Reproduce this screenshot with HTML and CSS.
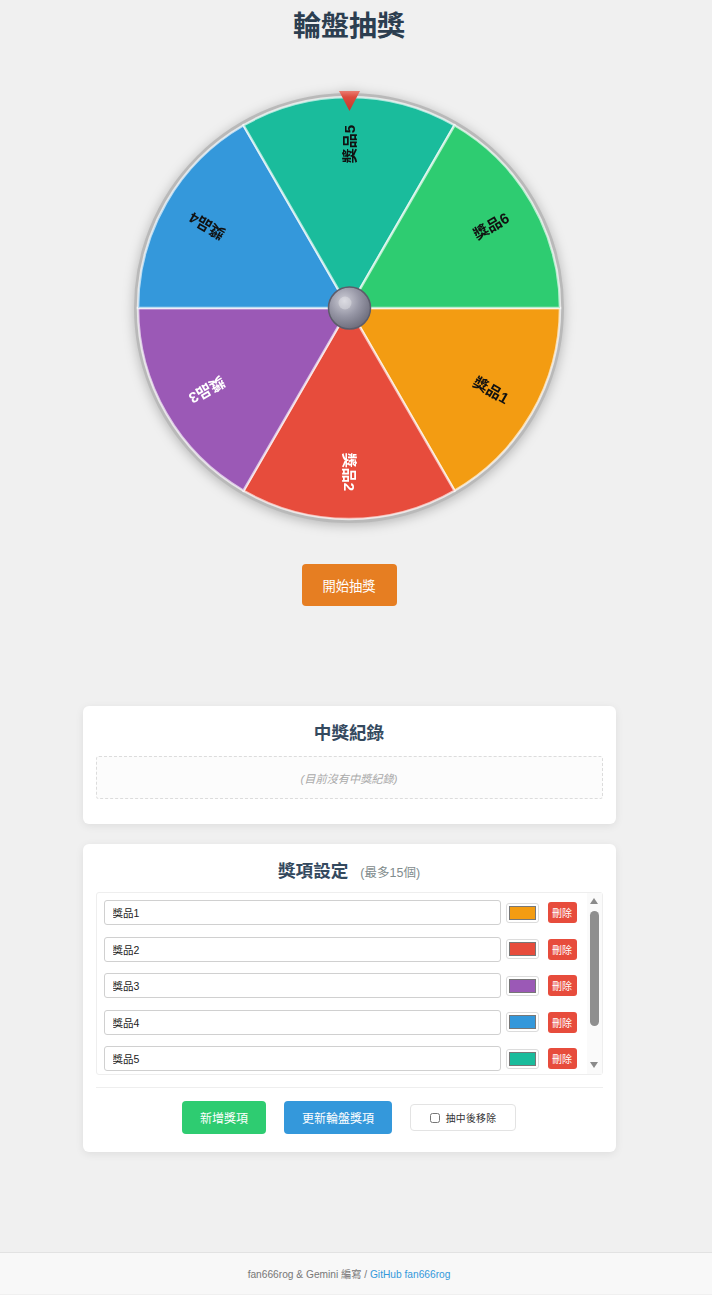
FILE: index.html
```html
<!DOCTYPE html>
<html lang="zh-Hant">
<head>
<meta charset="utf-8">
<title>輪盤抽獎</title>
<link rel="stylesheet" href="styles.css">
</head>
<body>
<main class="app">
  <h1 class="title">輪盤抽獎</h1>

  <div class="wheel-wrap">
    <svg class="wheel" width="440" height="440" viewBox="0 0 440 440">
      <defs>
        <radialGradient id="hubGrad" cx="38%" cy="33%" r="72%">
          <stop offset="0" stop-color="#cfcfd8"/>
          <stop offset="0.5" stop-color="#9797a6"/>
          <stop offset="1" stop-color="#6a6a79"/>
        </radialGradient>
        <linearGradient id="ptrGrad" x1="0" y1="0" x2="0" y2="1">
          <stop offset="0" stop-color="#ea7d71"/>
          <stop offset="0.3" stop-color="#dc4b3e"/>
          <stop offset="1" stop-color="#c0392b"/>
        </linearGradient>
      </defs>
      <circle class="rim" cx="220" cy="220" r="213"/>
      <g class="segments">
        <path d="M220,220 L431,220 A211,211 0 0 1 325.5,402.73 Z" fill="#f39c12"/>
        <path d="M220,220 L325.5,402.73 A211,211 0 0 1 114.5,402.73 Z" fill="#e74c3c"/>
        <path d="M220,220 L114.5,402.73 A211,211 0 0 1 9,220 Z" fill="#9b59b6"/>
        <path d="M220,220 L9,220 A211,211 0 0 1 114.5,37.27 Z" fill="#3498db"/>
        <path d="M220,220 L114.5,37.27 A211,211 0 0 1 325.5,37.27 Z" fill="#1abc9c"/>
        <path d="M220,220 L325.5,37.27 A211,211 0 0 1 431,220 Z" fill="#2ecc71"/>
      </g>
      <g class="labels">
        <text class="seg-label dark" transform="translate(220 220) rotate(30) translate(164 0)">獎品1</text>
        <text class="seg-label light" transform="translate(220 220) rotate(90) translate(164 0)">獎品2</text>
        <text class="seg-label light" transform="translate(220 220) rotate(150) translate(164 0)">獎品3</text>
        <text class="seg-label dark" transform="translate(220 220) rotate(210) translate(164 0)">獎品4</text>
        <text class="seg-label dark" transform="translate(220 220) rotate(270) translate(164 0)">獎品5</text>
        <text class="seg-label dark" transform="translate(220 220) rotate(330) translate(164 0)">獎品6</text>
      </g>
      <circle class="hub" cx="220.5" cy="220" r="21"/>
      <circle class="hub-shine" cx="216" cy="215" r="6.5"/>
      <polygon class="pointer" points="210,3 231,3 220.5,23"/>
    </svg>
  </div>

  <button class="spin-btn" type="button">開始抽獎</button>

  <section class="card card-records">
    <h2 class="card-title">中獎紀錄</h2>
    <div class="empty-records">(目前沒有中獎紀錄)</div>
  </section>

  <section class="card card-settings">
    <h2 class="card-title">獎項設定<small>(最多15個)</small></h2>
    <div class="prize-box">
      <div class="prize-list">
        <div class="prize-row">
          <input class="prize-name" type="text" value="獎品1">
          <input class="prize-color" type="color" value="#f39c12">
          <button class="del-btn" type="button">刪除</button>
        </div>
        <div class="prize-row">
          <input class="prize-name" type="text" value="獎品2">
          <input class="prize-color" type="color" value="#e74c3c">
          <button class="del-btn" type="button">刪除</button>
        </div>
        <div class="prize-row">
          <input class="prize-name" type="text" value="獎品3">
          <input class="prize-color" type="color" value="#9b59b6">
          <button class="del-btn" type="button">刪除</button>
        </div>
        <div class="prize-row">
          <input class="prize-name" type="text" value="獎品4">
          <input class="prize-color" type="color" value="#3498db">
          <button class="del-btn" type="button">刪除</button>
        </div>
        <div class="prize-row">
          <input class="prize-name" type="text" value="獎品5">
          <input class="prize-color" type="color" value="#1abc9c">
          <button class="del-btn" type="button">刪除</button>
        </div>
        <div class="prize-row">
          <input class="prize-name" type="text" value="獎品6">
          <input class="prize-color" type="color" value="#2ecc71">
          <button class="del-btn" type="button">刪除</button>
        </div>
      </div>
      <div class="scrollbar" aria-hidden="true">
        <span class="sb-arrow sb-up"></span>
        <span class="sb-thumb"></span>
        <span class="sb-arrow sb-down"></span>
      </div>
    </div>
    <div class="actions">
      <button class="btn btn-add" type="button">新增獎項</button>
      <button class="btn btn-update" type="button">更新輪盤獎項</button>
      <label class="remove-opt"><input type="checkbox"><span>抽中後移除</span></label>
    </div>
  </section>
</main>

<footer class="footer">
  fan666rog &amp; Gemini 編寫 / <a href="#">GitHub fan666rog</a>
</footer>
</body>
</html>
```

FILE: styles.css
```css
* {
  box-sizing: border-box;
}

html,
body {
  margin: 0;
  padding: 0;
}

body {
  background: #f0f0f0;
  font-family: "Liberation Sans", "Noto Sans CJK TC", sans-serif;
  color: #333;
}

.app {
  width: 698px;
  display: flex;
  flex-direction: column;
  align-items: center;
}

.title {
  margin: 0;
  padding-top: 10px;
  font-size: 28px;
  line-height: 34px;
  font-weight: 700;
  color: #2c3e50;
}

.wheel-wrap {
  margin-top: 44px;
  width: 440px;
  height: 440px;
}

.wheel {
  display: block;
  overflow: visible;
  filter: drop-shadow(0 2px 6px rgba(0, 0, 0, 0.25));
}

.rim {
  fill: #fff;
  stroke: #b9b9b9;
  stroke-width: 4;
}

.segments path {
  stroke: rgba(255, 255, 255, 0.65);
  stroke-width: 2.5;
}

.seg-label {
  font-family: "Liberation Sans", "Noto Sans CJK TC", sans-serif;
  font-size: 15px;
  font-weight: 700;
  text-anchor: middle;
  dominant-baseline: central;
}

.seg-label.dark {
  fill: #111;
}

.seg-label.light {
  fill: #fff;
}

.hub {
  fill: url(#hubGrad);
  stroke: #5c5c6a;
  stroke-width: 1.5;
}

.hub-shine {
  fill: rgba(255, 255, 255, 0.28);
}

.pointer {
  fill: url(#ptrGrad);
}

.spin-btn {
  margin-top: 36px;
  width: 95px;
  height: 42px;
  border: 0;
  border-radius: 4px;
  background: #e67e22;
  color: #fff;
  font-family: "Liberation Sans", "Noto Sans CJK TC", sans-serif;
  font-size: 13.3px;
  padding: 0;
}

.card {
  width: 533px;
  background: #fff;
  border-radius: 6px;
  box-shadow: 0 2px 8px rgba(0, 0, 0, 0.08);
  padding: 16px 13px 25px;
}

.card-records {
  margin-top: 100px;
}

.card-settings {
  margin-top: 20px;
  padding-bottom: 18px;
}

.card-title {
  margin: 0 0 12px;
  height: 22px;
  text-align: center;
  font-size: 17.6px;
  line-height: 22px;
  font-weight: 700;
  color: #34495e;
}

.card-settings .card-title {
  margin-bottom: 10px;
}

.card-title small {
  margin-left: 12px;
  font-size: 12.5px;
  line-height: 1;
  font-weight: 400;
  color: #7f8c8d;
}

.empty-records {
  height: 43px;
  border: 1px dashed #dcdcdc;
  border-radius: 3px;
  background: #fcfcfc;
  display: flex;
  align-items: center;
  justify-content: center;
  font-size: 11.2px;
  font-style: italic;
  color: #aaa;
}

.prize-box {
  position: relative;
  height: 183px;
  border: 1px solid #eee;
  border-radius: 3px;
}

.prize-list {
  height: 100%;
  overflow: hidden;
  padding: 7px 25px 0 7px;
}

.prize-row {
  display: flex;
  align-items: center;
  margin-bottom: 11.5px;
}

.prize-name {
  flex: 1;
  min-width: 0;
  height: 25px;
  border: 1px solid #d0d0d0;
  border-radius: 3px;
  padding: 0 8px;
  font-family: "Liberation Sans", "Noto Sans CJK TC", sans-serif;
  font-size: 10.5px;
  color: #222;
  background: #fff;
}

.prize-color {
  -webkit-appearance: none;
  appearance: none;
  margin: 0 0 0 5px;
  width: 33px;
  height: 20px;
  padding: 2px;
  border: 1px solid #dcdcdc;
  border-radius: 3px;
  background: #fff;
}

.prize-color::-webkit-color-swatch-wrapper {
  padding: 0;
}

.prize-color::-webkit-color-swatch {
  border: 1px solid #777;
  border-radius: 0;
}

.del-btn {
  margin-left: 9px;
  width: 29px;
  height: 21px;
  border: 0;
  border-radius: 3px;
  background: #e74c3c;
  color: #fff;
  font-family: "Liberation Sans", "Noto Sans CJK TC", sans-serif;
  font-size: 10px;
  padding: 0;
}

.scrollbar {
  position: absolute;
  top: 0;
  right: 0;
  bottom: 0;
  width: 15px;
  background: #fafafa;
}

.sb-arrow {
  position: absolute;
  left: 3px;
  width: 0;
  height: 0;
  border-left: 4.5px solid transparent;
  border-right: 4.5px solid transparent;
}

.sb-up {
  top: 5px;
  border-bottom: 6px solid #8a8a8a;
}

.sb-down {
  bottom: 6px;
  border-top: 6px solid #8a8a8a;
}

.sb-thumb {
  position: absolute;
  top: 18px;
  left: 3px;
  width: 9px;
  height: 115px;
  border-radius: 4.5px;
  background: #8f8f8f;
}

.actions {
  margin-top: 12px;
  border-top: 1px solid #eee;
  padding-top: 13px;
  display: flex;
  justify-content: center;
  align-items: center;
  gap: 18px;
}

.btn {
  height: 33px;
  padding: 0 18px;
  border: 0;
  border-radius: 4px;
  color: #fff;
  font-family: "Liberation Sans", "Noto Sans CJK TC", sans-serif;
  font-size: 12px;
}

.btn-add {
  background: #2ecc71;
}

.btn-update {
  background: #3498db;
}

.remove-opt {
  width: 106px;
  height: 27px;
  border: 1px solid #e3e3e3;
  border-radius: 4px;
  display: flex;
  align-items: center;
  justify-content: center;
  gap: 6px;
  font-size: 9.8px;
  letter-spacing: 0.3px;
  color: #333;
}

.remove-opt input {
  margin: 0;
  width: 10px;
  height: 10px;
}

.footer {
  margin-top: 100px;
  border-top: 1px solid #e2e2e2;
  background: #f8f8f8;
  text-align: center;
  padding: 15px 14px 13px 0;
  font-size: 10.2px;
  line-height: 13px;
  color: #777;
}

.footer a {
  color: #3498db;
  text-decoration: none;
}
```
